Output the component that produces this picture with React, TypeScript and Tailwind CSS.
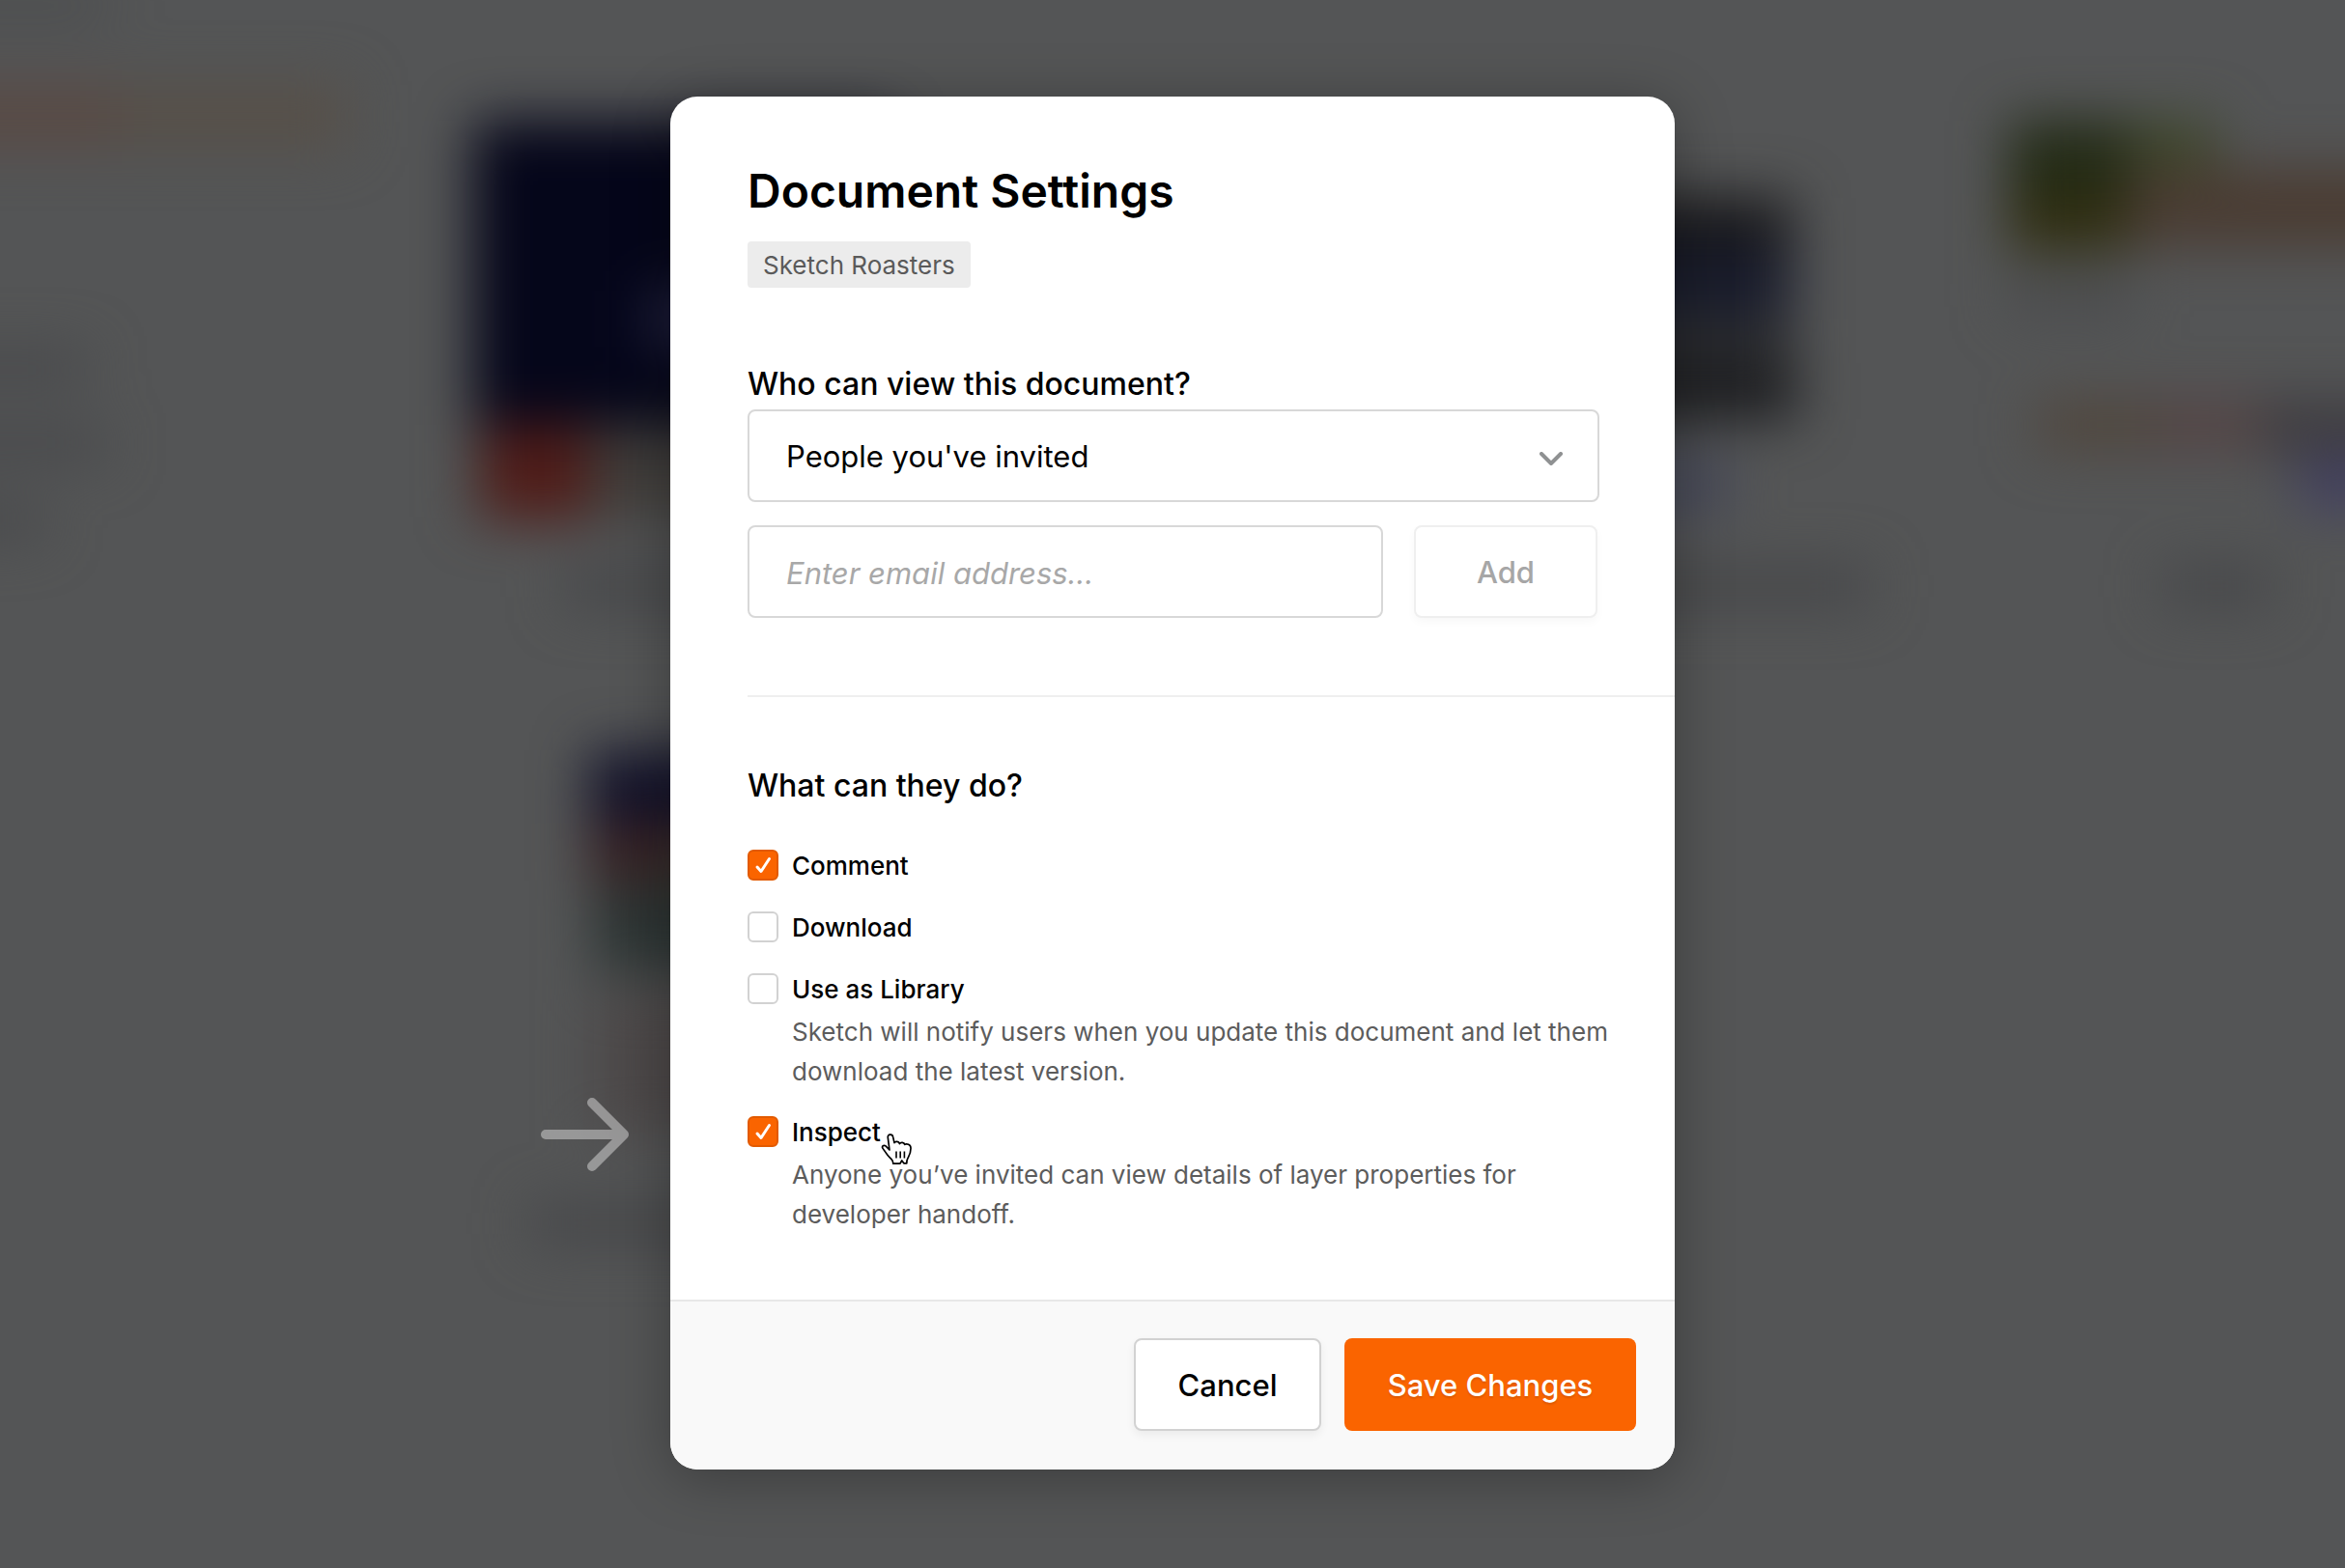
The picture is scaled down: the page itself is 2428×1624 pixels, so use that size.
import React, { useState } from 'react';

interface Permission {
  id: string;
  label: string;
  description?: string;
}

const permissions: Permission[] = [
  { id: 'comment', label: 'Comment' },
  { id: 'download', label: 'Download' },
  {
    id: 'library',
    label: 'Use as Library',
    description: 'Sketch will notify users when you update this document and let them download the latest version.'
  },
  {
    id: 'inspect',
    label: 'Inspect',
    description: 'Anyone you’ve invited can view details of layer properties for developer handoff.'
  }
];

const Card: React.FC<{ titleClass?: string; children?: React.ReactNode }> = ({ titleClass = 'w-60', children }) => (
  <div className="flex flex-col items-center h-[560px]">
    <svg viewBox="0 0 430 430" className="w-full h-[430px] overflow-visible">{children}</svg>
    <div className={`mt-8 h-10 bg-[#454648] ${titleClass}`} />
  </div>
);

// Blurred document grid that sits behind the dialog
const Gallery: React.FC = () => (
  <div aria-hidden="true" className="absolute inset-0 overflow-hidden">
    <div className="-mx-20 flex h-full blur-[28px]">
      <div className="w-[440px] shrink-0">
        <div className="h-3 w-48 bg-[#3f4042]" />
        <div className="mt-[76px] w-full h-16 bg-[#575048]">
          <div className="w-[200px] h-full bg-[#594a44]" />
        </div>
        <div className="mt-[212px] w-[170px] h-8 bg-[#464749]" />
        <div className="mt-12 w-[190px] h-8 bg-[#464749]" />
        <div className="mt-12 w-[125px] h-8 bg-[#464749]" />
      </div>
      <div className="ml-[130px] mt-[125px] shrink-0 grid grid-cols-[repeat(4,430px)] auto-rows-min gap-[100px]">
        <Card>
          <rect width="430" height="315" fill="#05061a" />
          <rect x="180" y="175" width="120" height="60" fill="#22223f" />
          <rect y="315" width="430" height="95" fill="#403d3a" />
          <rect x="10" y="315" width="110" height="98" fill="#501c18" />
        </Card>
        <Card />
        <Card titleClass="w-[340px]">
          <rect y="80" width="305" height="50" fill="#18181a" />
          <rect y="130" width="305" height="75" fill="#191c2c" />
          <rect y="205" width="305" height="45" fill="#2e2f31" />
          <rect y="250" width="310" height="60" fill="#1c1d20" />
          <rect x="140" y="355" width="100" height="45" fill="#414459" />
        </Card>
        <Card titleClass="w-28">
          <rect width="125" height="75" fill="#232b16" />
          <rect y="75" width="125" height="60" fill="#302e10" />
          <rect x="125" width="90" height="50" fill="#3d462a" />
          <rect x="125" y="50" width="400" height="80" fill="#4a3c32" />
          <rect y="160" width="125" height="40" fill="#4a4b4c" />
          <rect x="30" y="290" width="120" height="50" fill="#50463c" />
          <rect x="150" y="290" width="110" height="50" fill="#544444" />
          <rect x="260" y="290" width="150" height="55" fill="#3e3c40" />
          <rect x="300" y="350" width="90" height="50" fill="#403e62" />
        </Card>
        <Card titleClass="w-[310px]">
          <rect x="120" y="-8" width="310" height="75" fill="#12122a" />
          <rect x="120" y="67" width="120" height="60" fill="#382123" />
          <rect x="200" y="90" width="230" height="80" fill="#3b342a" />
          <rect x="125" y="127" width="305" height="95" fill="#2c3433" />
          <rect x="125" y="240" width="305" height="150" fill="#4c4848" />
        </Card>
      </div>
    </div>
  </div>
);

const ArrowIcon: React.FC = () => (
  <svg
    viewBox="0 0 92 76"
    className="absolute right-full top-1/2 mr-[122px] -mt-[35px] w-[92px] h-[76px] opacity-40"
    fill="none"
    stroke="#fff"
    strokeWidth="10"
    strokeLinecap="round"
    strokeLinejoin="round"
    aria-hidden="true"
  >
    <path d="M5 38H84M53 5L86 38L53 71" />
  </svg>
);

const PointerIcon: React.FC = () => (
  <svg viewBox="0 0 33 33" className="absolute left-full top-[18px] w-[33px] h-[33px]" aria-hidden="true">
    <path
      d="M9 17L7.3 4.2C6.8 .3 12 0 12.6 3.4L14 9.6C15 7.8 18.6 7.8 19.4 10.6C20.6 8.6 24 8.9 24.8 11.4C26.6 10 31 11.4 31 15C31.2 20 29.6 22.4 28 25.4C27 27.2 26.8 28.6 26.8 30.8H23.8L21.8 28L19.8 31.2H12.8C12.8 29 12 27.6 10.6 26.2C8.6 24.2 6.6 22.4 5.4 20.2C4.2 18 3.2 17.2 2 15.4C.6 13.2 3 11.4 5 12.9Z"
      fill="#fff"
      stroke="#000"
      strokeWidth="1.7"
      strokeLinejoin="round"
    />
    <path d="M16 18.5V25.5M20.2 18.5V25.5M24.4 18.5V25.5" stroke="#000" strokeWidth="1.6" />
  </svg>
);

const App: React.FC = () => {
  const [access, setAccess] = useState('invited');
  const [email, setEmail] = useState('');
  const [enabled, setEnabled] = useState<string[]>(['comment', 'inspect']);

  const toggle = (id: string) => {
    setEnabled(enabled.includes(id) ? enabled.filter((item) => item !== id) : [...enabled, id]);
  };

  return (
    <div className="relative min-h-screen bg-[#545556] font-['Inter','Liberation_Sans',sans-serif] text-black">
      <Gallery />

      <div className="relative flex items-start justify-center py-[100px]">
        <div
          role="dialog"
          aria-labelledby="dialog-title"
          className="w-full max-w-[1040px] rounded-[28px] bg-white shadow-[0_8px_60px_rgba(0,0,0,0.3)]"
        >
          {/* Header and access */}
          <div className="pl-20 pr-[78px] pt-[68px] pb-20">
            <h1 id="dialog-title" className="text-[48px] leading-[60px] font-semibold">Document Settings</h1>
            <div className="mt-[22px] inline-flex h-12 items-center rounded px-4 bg-[#ececec] text-[26px] text-[#5a5a5a]">
              Sketch Roasters
            </div>

            <label htmlFor="access" className="mt-20 block text-[32px] leading-10 font-medium">
              Who can view this document?
            </label>
            <div className="relative mt-1.5">
              <select
                id="access"
                value={access}
                onChange={(e) => setAccess(e.target.value)}
                className="block w-full h-24 appearance-none rounded-lg border-2 border-[#d8d8d8] bg-white px-[38px] pt-0.5 text-[31px]"
              >
                <option value="invited">People you've invited</option>
              </select>
              <svg
                viewBox="0 0 24 14"
                className="pointer-events-none absolute right-[38px] top-11 w-6 h-3.5"
                fill="none"
                stroke="#8f9192"
                strokeWidth="4"
                strokeLinecap="round"
                strokeLinejoin="round"
                aria-hidden="true"
              >
                <path d="M2 2L12 12L22 2" />
              </svg>
            </div>

            <div className="mt-6 flex gap-8 pr-0.5">
              <input
                type="email"
                aria-label="Email address"
                placeholder="Enter email address…"
                value={email}
                onChange={(e) => setEmail(e.target.value)}
                className="min-w-0 flex-1 h-24 rounded-lg border-2 border-[#d8d8d8] bg-white px-[38px] pt-0.5 text-[31px] placeholder:italic placeholder:text-[#a8a8a8]"
              />
              <button
                type="button"
                disabled
                className="w-[190px] h-24 rounded-lg border-2 border-[#efefef] bg-white pt-0.5 text-[31px] font-medium text-[#a6a6a6] shadow-[0_4px_10px_rgba(0,0,0,0.03)]"
              >
                Add
              </button>
            </div>
          </div>

          {/* Permissions */}
          <div className="ml-20 border-t-2 border-[#efefef] pr-16 pt-[72px] pb-[42px]">
            <h2 className="text-[32px] leading-10 font-medium">What can they do?</h2>
            <div className="mt-[46px]">
              {permissions.map((item) => (
                <div key={item.id} className={item.description ? 'mb-[26px]' : 'mb-8'}>
                  <div className="relative flex h-8">
                    {item.id === 'inspect' && <ArrowIcon />}
                    <label htmlFor={item.id} className="relative flex items-center gap-3.5 text-[26px] font-medium">
                      <span className="relative block w-8 h-8">
                        <input
                          id={item.id}
                          type="checkbox"
                          checked={enabled.includes(item.id)}
                          onChange={() => toggle(item.id)}
                          className="peer block w-8 h-8 appearance-none rounded-md border-2 border-[#d2d2d2] bg-white checked:border-[#e25a00] checked:bg-[#fa6400]"
                        />
                        <svg
                          viewBox="0 0 32 32"
                          className="pointer-events-none absolute inset-0 hidden w-8 h-8 peer-checked:block"
                          fill="none"
                          stroke="#fff"
                          strokeWidth="3"
                          strokeLinecap="round"
                          strokeLinejoin="round"
                          aria-hidden="true"
                        >
                          <path d="M10 18L14 22.5L22.5 9.5" />
                        </svg>
                      </span>
                      {item.label}
                      {item.id === 'inspect' && <PointerIcon />}
                    </label>
                  </div>
                  {item.description && (
                    <p className="mt-2 ml-[46px] text-[26px] leading-[41px] text-[#5c5c5c]">{item.description}</p>
                  )}
                </div>
              ))}
            </div>
          </div>

          {/* Footer */}
          <div className="flex justify-end gap-6 rounded-b-[28px] border-t-2 border-[#e8e8e8] bg-[#f9f9f9] px-10 pt-[38px] pb-10">
            <button
              type="button"
              className="w-[194px] h-24 rounded-lg border-2 border-[#d2d2d2] bg-white pt-0.5 text-[31px] font-medium shadow-[0_4px_10px_rgba(0,0,0,0.06)]"
            >
              Cancel
            </button>
            <button
              type="button"
              className="w-[302px] h-24 rounded-lg bg-[#fa6400] pt-0.5 text-[31px] font-medium text-white [text-shadow:0_2px_2px_rgba(0,0,0,0.12)]"
            >
              Save Changes
            </button>
          </div>
        </div>
      </div>
    </div>
  );
};

export default App;
